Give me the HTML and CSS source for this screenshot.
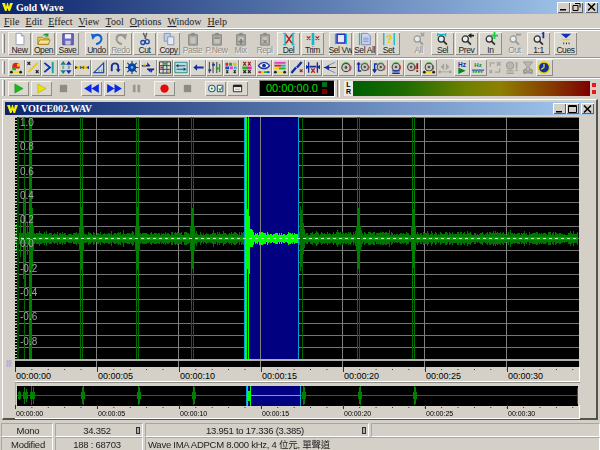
FILE: index.html
```html
<!DOCTYPE html>
<html lang="en">
<head>
<meta charset="utf-8">
<title>GoldWave</title>
<link rel="stylesheet" href="styles.css">
</head>
<body>
<svg class="defs" width="0" height="0" aria-hidden="true">
  <defs>
    <symbol id="logo" viewBox="0 0 11 8"><path d="M0 0h3l1 4 1-4h1l1 4 1-4h3L8 8H6.500L5.500 5 4.500 8H3z" fill="#f8f000"/></symbol>
    <symbol id="mag" viewBox="0 0 16 16"><circle cx="6" cy="8" r="3.500" fill="#e8eef0" stroke="currentColor" stroke-width="1.400"/><path d="M8.500 10.500l4 4" stroke="currentColor" stroke-width="2"/></symbol>
    <symbol id="clip" viewBox="0 0 16 16"><path d="M3 3h10v12H3z" fill="#a8a8a2" stroke="#807f7a"/><path d="M6 1h4v3H6z" fill="#8c8c86"/><path d="M5 6h6v7H5z" fill="#c4c4be"/></symbol>
    <symbol id="dial" viewBox="0 0 14 14"><circle cx="7" cy="7" r="4.500" fill="#c8c8c0" stroke="#404040" stroke-width="1.200"/><path d="M3 3.500a5.500 5.500 0 0 1 8 0" fill="none" stroke="#30b030"/><path d="M12 5a5.500 5.500 0 0 1-1 6" fill="none" stroke="#d03030"/><circle cx="7" cy="7" r="1.500" fill="#505050"/></symbol>
    <symbol id="rain" viewBox="0 0 14 14"><path d="M1 2h3v3H1z" fill="#e02020"/><path d="M5 2h3v3H5z" fill="#20a020"/><path d="M9 2h4v3H9z" fill="#e0c020"/><path d="M1 6h4v3H1z" fill="#2040d0"/><path d="M6 6h3v3H6z" fill="#e040d0"/><path d="M10 6h3v3h-3z" fill="#20c0c0"/></symbol>
  </defs>
</svg>
<div class="app">
  <header class="titlebar">
    <svg class="logo" width="11" height="8"><use href="#logo"/></svg>
    <span class="title">Gold Wave</span>
    <div class="caption">
      <button class="cap"><svg width="9" height="8"><path d="M1 6h6v1.500H1z" fill="#000"/></svg></button>
      <button class="cap"><svg width="9" height="8"><path d="M3 .5h5v4M1 2.500h5v5H1z" fill="none" stroke="#000"/></svg></button>
      <button class="cap cap-gap"><svg width="9" height="8"><path d="M1 .5l7 7M8 .5l-7 7" stroke="#000" stroke-width="1.500"/></svg></button>
    </div>
  </header>
  <nav class="menu">
    <span class="m m-file"><u>F</u>ile</span>
    <span class="m"><u>E</u>dit</span>
    <span class="m"><u>E</u>ffect</span>
    <span class="m"><u>V</u>iew</span>
    <span class="m"><u>T</u>ool</span>
    <span class="m"><u>O</u>ptions</span>
    <span class="m"><u>W</u>indow</span>
    <span class="m"><u>H</u>elp</span>
  </nav>

  <div class="row row1">
    <i class="grip"></i>
    <div class="grp">
      <div class="b"><svg viewBox="0 0 16 16"><path d="M3.500 1.500h6l3 3v10h-9z" fill="#fff" stroke="#8a96b8"/><path d="M9.500 1.500v3h3" fill="#d8e0f0" stroke="#8a96b8"/></svg><span>New</span></div>
      <div class="b"><svg viewBox="0 0 16 16"><path d="M1 6h5l1 1h6v7H1z" fill="#f0d060" stroke="#a08020"/><path d="M1 14l2-5h12l-2 5z" fill="#f8e488" stroke="#a08020"/><path d="M6 5c1-3 4-4 6-3l1-1v4H9l1-1c-1-.5-3 0-4 1z" fill="#20a030"/></svg><span>Open</span></div>
      <div class="b"><svg viewBox="0 0 16 16"><path d="M2 2h12v12.500H2z" fill="#6a68c0" stroke="#403e90"/><path d="M4.500 2.500h7v5h-7z" fill="#f0f0f8"/><path d="M5 10h6v4.500H5z" fill="#c8c8d8"/></svg><span>Save</span></div>
    </div>
    <div class="grp g6">
      <div class="b"><svg viewBox="0 0 16 16"><path d="M3 7c2-5 9-5 10 0 .6 3-2 6-6 7" fill="none" stroke="#1060d8" stroke-width="2.400"/><path d="M1 2l6 1-4 6z" fill="#1060d8"/></svg><span>Undo</span></div>
      <div class="b off"><svg viewBox="0 0 16 16"><path d="M13 7C11 2 4 2 3 7c-.6 3 2 6 6 7" fill="none" stroke="#989890" stroke-width="2.400"/><path d="M15 2l-6 1 4 6z" fill="#989890"/></svg><span>Redo</span></div>
      <div class="b"><svg viewBox="0 0 16 16"><path d="M6 1l3 7M10 1L8 8" stroke="#606060" stroke-width="1.600"/><circle cx="5.500" cy="12" r="2.300" fill="none" stroke="#1848b0" stroke-width="1.500"/><circle cx="10.500" cy="11" r="2.300" fill="none" stroke="#1848b0" stroke-width="1.500"/></svg><span>Cut</span></div>
      <div class="b"><svg viewBox="0 0 16 16"><path d="M2.500 1.500h7v9h-7z" fill="#c0cce8" stroke="#7f8fb4"/><path d="M6.500 5.500h7v9h-7z" fill="#e4eaf6" stroke="#7f8fb4"/></svg><span>Copy</span></div>
      <div class="b off flat"><svg viewBox="0 0 16 16"><use href="#clip"/></svg><span>Paste</span></div>
      <div class="b off flat"><svg viewBox="0 0 16 16"><use href="#clip"/><path d="M5 6h6v2H5z" fill="#8c8c86"/></svg><span>P.New</span></div>
      <div class="b off flat"><svg viewBox="0 0 16 16"><use href="#clip"/><path d="M7 8h2v2h2v2H9v2H7v-2H5v-2h2z" fill="#807f7a"/></svg><span>Mix</span></div>
      <div class="b off flat"><svg viewBox="0 0 16 16"><use href="#clip"/><path d="M6 9l4 4M10 9l-4 4" stroke="#807f7a" stroke-width="1.300"/></svg><span>Repl</span></div>
      <div class="b"><svg viewBox="0 0 16 16"><path d="M3.500 1v14M12.500 1v14" stroke="#10b8c8" stroke-width="1.600"/><path d="M1 1.500h4M1 14.500h4M11 1.500h4M11 14.500h4" stroke="#10b8c8"/><path d="M4.500 3l7 10M11.500 3l-7 10" stroke="#b02020" stroke-width="1.800"/></svg><span>Del</span></div>
      <div class="b"><svg viewBox="0 0 16 16"><path d="M8 1v14" stroke="#10b8c8" stroke-width="3"/><path d="M1 5l4 4M5 5L1 9M11 5l4 4M15 5l-4 4" stroke="#c02020" stroke-width="1.500"/></svg><span>Trim</span></div>
    </div>
    <div class="grp g5">
      <div class="b"><svg viewBox="0 0 16 16"><path d="M1 2h1.500v12H1zM13.500 2H15v12h-1.500z" fill="#10b8c8"/><path d="M3.500 2.500h9v10h-9z" fill="#e8e8f8" stroke="#2030c0" stroke-width="1.800"/></svg><span>Sel Vw</span></div>
      <div class="b"><svg viewBox="0 0 16 16"><path d="M1 1h1.500v14H1z" fill="#10b8c8"/><path d="M4 1.500h7l3 3v10H4z" fill="#c8d4f0" stroke="#7080b8"/><path d="M6 7h6M6 9h6M6 11h6" stroke="#8090c0"/></svg><span>Sel All</span></div>
      <div class="b"><svg viewBox="0 0 16 16"><path d="M2 1v14M14 1v14" stroke="#10b8c8" stroke-width="1.500"/><text x="8" y="12" class="q">?</text></svg><span>Set</span></div>
    </div>
    <div class="grp g7">
      <div class="b off flat gr"><svg viewBox="0 0 16 16"><use href="#mag"/><path d="M10 1l4 4M14 1l-4 4" stroke="#989890" stroke-width="1.500"/></svg><span>All</span></div>
      <div class="b dk"><svg viewBox="0 0 16 16"><use href="#mag"/><path d="M2 1v4M11 1v4M2 3h9" stroke="#10b8c8" stroke-width="1.300"/></svg><span>Sel</span></div>
      <div class="b dk"><svg viewBox="0 0 16 16"><use href="#mag"/><path d="M9 4l4-3v2h3v2h-3v2z" fill="#202020"/></svg><span>Prev</span></div>
      <div class="b dk"><svg viewBox="0 0 16 16"><use href="#mag"/><path d="M11 0h2v3h3v2h-3v3h-2V5H8V3h3z" fill="#10d040"/></svg><span>In</span></div>
      <div class="b off flat gr"><svg viewBox="0 0 16 16"><use href="#mag"/><path d="M9 2h6v2H9z" fill="#989890"/></svg><span>Out</span></div>
      <div class="b dk"><svg viewBox="0 0 16 16"><use href="#mag"/><path d="M11 1l2-1h1v7h-2V2h-1z" fill="#1030a0"/></svg><span>1:1</span></div>
    </div>
    <div class="grp g4">
      <div class="b"><svg viewBox="0 0 16 16"><path d="M2 2h12L8 7z" fill="#1030c0"/><path d="M3 8h10v1.500H3z" fill="#f0d000"/><path d="M5 12h1v2H5zM8 12h1v2H8zM11 12h1v2h-1z" fill="#202020"/></svg><span>Cues</span></div>
    </div>
  </div>

  <div class="row row2">
    <i class="grip"></i>
    <div class="s"><svg viewBox="0 0 14 14"><path d="M3 6a4 4 0 0 1 8 0v2H3z" fill="#e02020"/><path d="M3 7h4v3H3z" fill="#20b020"/><path d="M8 3h3v3H8z" fill="#f0d000"/><path d="M1 12h12" stroke="#f0e000" stroke-width="1.500"/><circle cx="2" cy="12" r="1.500" fill="#202020"/><circle cx="12" cy="12" r="1.500" fill="#202020"/></svg></div>
    <div class="s"><svg viewBox="0 0 14 14"><path d="M2 12l10-10" stroke="#e8c820" stroke-width="2"/><path d="M1 1l3 3M4 1L1 4M10 10l3 3M13 10l-3 3" stroke="#202020" stroke-width="1.300"/></svg></div>
    <div class="s"><svg viewBox="0 0 14 14"><path d="M2 2l6 5-6 5" fill="none" stroke="#1030c0" stroke-width="2"/><path d="M11 1v12" stroke="#10a0a0" stroke-width="2"/></svg></div>
    <div class="s"><svg viewBox="0 0 14 14"><path d="M4 0l3 4H1zM4 14l3-4H1z" fill="#108080"/><path d="M10 0l3 4H7zM10 14l3-4H7z" fill="#1030b0"/><path d="M4 5v4M10 5v4" stroke="#108080" stroke-width="2" stroke-dasharray="1 1"/></svg></div>
    <div class="s"><svg viewBox="0 0 16 14"><path d="M0 7h16" stroke="#e8c820" stroke-width="3"/><path d="M0 5l3 2-3 2zM16 5l-3 2 3 2zM6 5l2 2 2-2v4L8 7 6 9z" fill="#1030c0"/></svg></div>
    <div class="s"><svg viewBox="0 0 14 14"><path d="M1.500 12.500L12 2v10.500z" fill="#d0d8f0" stroke="#1848b0" stroke-width="1.300"/><path d="M7 12.500v-3M10 12.500V9" stroke="#a0a000"/></svg></div>
    <div class="s"><svg viewBox="0 0 14 14"><path d="M3.500 11V6a3.500 3.500 0 0 1 7 0v4" fill="none" stroke="#1030a0" stroke-width="2"/><path d="M8 9h5l-2.500 3.500z" fill="#1030a0"/></svg></div>
    <div class="s"><svg viewBox="0 0 14 14"><circle cx="7" cy="7" r="4.500" fill="#1040a0"/><path d="M7 0v14M0 7h14M2 2l10 10M12 2L2 12" stroke="#1040a0" stroke-width="1.300"/><circle cx="7" cy="7" r="1.500" fill="#40c0d0"/></svg></div>
    <div class="s"><svg viewBox="0 0 16 14"><path d="M1 5h9M7 9h8" stroke="#202050" stroke-width="1.500"/><path d="M7 1l4 4-4 0zM11 13l-4-4 4 0z" fill="#1030c0"/><path d="M4 2L2 5h4z" fill="#e0c020"/><path d="M12 13l-2-4h4z" fill="#1030c0"/></svg></div>
    <div class="s"><svg viewBox="0 0 14 14"><path d="M1 1h12v12H1z" fill="#e0e0d0" stroke="#303030"/><path d="M1 5h12M1 9h12M5 1v12M9 1v12" stroke="#204080"/><path d="M2 6h3v2H2z" fill="#c03030"/><path d="M6 2h3v2H6z" fill="#30a030"/><path d="M10 10h2v2h-2z" fill="#e0c020"/></svg></div>
    <div class="s lit"><svg viewBox="0 0 16 14"><path d="M1 1h14v12H1z" fill="#b8dcd8" stroke="#208080"/><path d="M3 5h10M3 9h10" stroke="#104080"/><path d="M5 3L2 5l3 2zM11 7l3 2-3 2z" fill="#104080"/></svg></div>
    <div class="s"><svg viewBox="0 0 14 14"><path d="M2 7l4-3.500V6h7v2H6v2.500z" fill="#1030a0"/></svg></div>
    <div class="s"><svg viewBox="0 0 14 14"><path d="M2 1v12M6 1v12M10 1v12" stroke="#303030"/><path d="M1 9h3v2H1zM5 3h3v2H5z" fill="#204080"/><path d="M9 7h3v2H9z" fill="#20a020"/><path d="M13 3v9" stroke="#20a020" stroke-width="1.500"/></svg></div>
    <div class="s"><svg viewBox="0 0 14 14"><use href="#rain"/><path d="M2 10l2 3M4 10l-2 3M10 10l2 3M12 10l-2 3" stroke="#202020" stroke-width="1.200"/></svg></div>
    <div class="s"><svg viewBox="0 0 14 14"><path d="M3 1l3 4M6 1L3 5M8 1l3 4M11 1L8 5" stroke="#a02020" stroke-width="1.300"/><path d="M2 6h5v3H2z" fill="#20b020"/><path d="M7 6h5v3H7z" fill="#e020c0"/><path d="M3 10l3 3M6 10l-3 3M8 10l3 3M11 10l-3 3" stroke="#202020" stroke-width="1.300"/></svg></div>
    <div class="s"><svg viewBox="0 0 14 14"><path d="M1 5c3-4.500 9-4.500 12 0-3 4.500-9 4.500-12 0z" fill="#e8e8f8" stroke="#1030a0" stroke-width="1.200"/><circle cx="7" cy="5" r="2" fill="#1030a0"/><path d="M1 11h3v2H1z" fill="#e02020"/><path d="M4 11h3v2H4z" fill="#f0d000"/><path d="M7 11h3v2H7z" fill="#20b020"/><path d="M10 11h3v2h-3z" fill="#2040e0"/></svg></div>
    <div class="s"><svg viewBox="0 0 14 14"><path d="M1 1h12v2H1z" fill="#e040c0"/><path d="M1 4h7v2H1z" fill="#e02020"/><path d="M8 4h5v2H8z" fill="#20a0e0"/><path d="M1 7h5v2H1z" fill="#f0d000"/><path d="M6 7h7v2H6z" fill="#20b020"/><path d="M1 12h12" stroke="#f0e000" stroke-width="1.200"/><circle cx="2" cy="12" r="1.500" fill="#202020"/><circle cx="12" cy="12" r="1.500" fill="#202020"/></svg></div>
    <div class="s"><svg viewBox="0 0 14 14"><path d="M1 13l5-6M7 7l5-6" stroke="#1030a0" stroke-width="2.500"/><path d="M10 9l3 3M13 9l-3 3" stroke="#a02020" stroke-width="1.300"/></svg></div>
    <div class="s"><svg viewBox="0 0 16 14"><path d="M3 1v12M13 1v12" stroke="#1030a0" stroke-width="1.500"/><path d="M0 4l4 2.500L0 9zM16 4l-4 2.500L16 9z" fill="#1030a0"/><path d="M4 6h8" stroke="#1030a0" stroke-width="2"/><path d="M6 8l4 5M10 8l-4 5" stroke="#c02020" stroke-width="1.600"/></svg></div>
    <div class="s"><svg viewBox="0 0 16 14"><path d="M1 7h14" stroke="#1030a0" stroke-width="1.200"/><path d="M5 5l9-4M5 9l9 4" stroke="#7080c0"/><path d="M1 7l6-3v6z" fill="#1030a0"/></svg></div>
    <div class="s"><svg viewBox="0 0 14 14"><use href="#dial"/></svg></div>
    <div class="s"><svg viewBox="0 0 16 14"><path d="M1 3h4M3 1v10h3" fill="none" stroke="#1030a0" stroke-width="1.800"/><svg x="3" width="13" height="14" viewBox="0 0 14 14"><use href="#dial"/></svg></svg></div>
    <div class="s"><svg viewBox="0 0 16 14"><path d="M3 11V3h3M1 9l2 3 2-3" fill="none" stroke="#1030a0" stroke-width="1.600"/><svg x="3" width="13" height="14" viewBox="0 0 14 14"><use href="#dial"/></svg></svg></div>
    <div class="s"><svg viewBox="0 0 14 14"><svg width="14" height="10" viewBox="0 0 14 14"><use href="#dial"/></svg><path d="M3 10h8v1.300H3zM3 12.500h8V14H3z" fill="#1030a0"/></svg></div>
    <div class="s"><svg viewBox="0 0 16 14"><svg width="13" height="14" viewBox="0 0 14 14"><use href="#dial"/></svg><path d="M13 2h2v7h-2zM13 10h2v2h-2z" fill="#a01010"/></svg></div>
    <div class="s"><svg viewBox="0 0 14 14"><svg width="14" height="11" viewBox="0 0 14 14"><use href="#dial"/></svg><path d="M1 12h12" stroke="#f0e000" stroke-width="1.500"/><circle cx="2" cy="12" r="1.500" fill="#202020"/><circle cx="12" cy="12" r="1.500" fill="#202020"/></svg></div>
    <div class="s flat"><svg viewBox="0 0 16 14"><path d="M7 2L3 6l4 4zM9 2l4 4-4 4z" fill="#a4a49c"/><path d="M1 12h14" stroke="#a4a49c"/><circle cx="2" cy="12" r="1.500" fill="#a4a49c"/><circle cx="14" cy="12" r="1.500" fill="#a4a49c"/></svg></div>
    <div class="s"><svg viewBox="0 0 14 14"><text x="7" y="6" class="hz hz-b">Hz</text><path d="M3 7l8 3.500L3 14z" fill="#108030"/></svg></div>
    <div class="s"><svg viewBox="0 0 16 14"><text x="8" y="6" class="hz hz-g">Hz</text><path d="M1 10h14" stroke="#1040a0" stroke-width="1.200"/><path d="M2 12h12" stroke="#30a030" stroke-width="2" stroke-dasharray="2 1"/></svg></div>
    <div class="s flat"><svg viewBox="0 0 14 14"><path d="M2 6V2h5M12 8v4H7M1 10l3 3M4 10l-3 3M9 1l4 4M13 1L9 5" fill="none" stroke="#a4a49c" stroke-width="1.500"/></svg></div>
    <div class="s flat"><svg viewBox="0 0 14 14"><circle cx="6" cy="5" r="4" fill="#b8b8b0" stroke="#989890"/><path d="M2 10h8v1.300H2zM2 12.500h8V14H2zM12 1h2v7h-2zM12 9h2v2h-2z" fill="#a4a49c"/></svg></div>
    <div class="s flat"><svg viewBox="0 0 14 14"><path d="M2 1h10L8 6l4 7H2l4-7z" fill="#b8b8b0" stroke="#989890"/><circle cx="4" cy="11" r="2" fill="none" stroke="#8c8c84"/><circle cx="10" cy="11" r="2" fill="none" stroke="#8c8c84"/></svg></div>
    <div class="s"><svg viewBox="0 0 14 14"><circle cx="7" cy="7" r="6" fill="#1030a0" stroke="#e8d000" stroke-width="1.500"/><path d="M7 3v4l-3 2" fill="none" stroke="#f0e040" stroke-width="1.300"/></svg></div>
  </div>

  <div class="row row3">
    <i class="grip"></i>
    <div class="tgrp">
      <div class="t"><svg viewBox="0 0 12 12"><path d="M2 1l9 5-9 5z" fill="#18b818" stroke="#108010" stroke-width=".5"/></svg></div>
      <div class="t"><svg viewBox="0 0 12 12"><path d="M2 1l9 5-9 5z" fill="#e8e010" stroke="#a0a000" stroke-width=".5"/></svg></div>
      <div class="t flat"><svg viewBox="0 0 12 12"><path d="M2 2h8v8H2z" fill="#8c8c86"/></svg></div>
    </div>
    <div class="tgrp">
      <div class="t"><svg class="wide" viewBox="0 0 18 12"><path d="M9 1v10L1 6zM17 1v10L9 6z" fill="#0828e8"/></svg></div>
      <div class="t"><svg class="wide" viewBox="0 0 18 12"><path d="M1 1v10l8-5zM9 1v10l8-5z" fill="#0828e8"/></svg></div>
      <div class="t flat"><svg viewBox="0 0 12 12"><path d="M2 2h3v8H2zM7 2h3v8H7z" fill="#989890"/></svg></div>
    </div>
    <div class="tgrp">
      <div class="t"><svg viewBox="0 0 12 12"><circle cx="6" cy="6" r="4.500" fill="#e80808"/></svg></div>
      <div class="t flat"><svg viewBox="0 0 12 12"><path d="M2 2h8v8H2z" fill="#8c8c86"/></svg></div>
    </div>
    <div class="tgrp">
      <div class="t"><svg class="wide" viewBox="0 0 18 12"><circle cx="5" cy="6" r="3.500" fill="#f4f4f0" stroke="#206080" stroke-width="1.200"/><circle cx="5" cy="6" r="1.200" fill="#208040"/><path d="M11 2.500h6v7h-6z" fill="#f4f4f0" stroke="#204080"/><path d="M12.500 6l1.500 2 2.500-4" fill="none" stroke="#10a030" stroke-width="1.200"/></svg></div>
      <div class="t"><svg viewBox="0 0 12 12"><path d="M1.500 2.500h9v7h-9z" fill="#fff" stroke="#202020"/><path d="M1.500 2h9v2.500h-9z" fill="#202020"/><path d="M3 6h6v2H3z" fill="#c0c0b8"/></svg></div>
    </div>
    <div class="clock">
      <span class="digits">00:00:00.0</span>
      <div class="leds"><i class="led led-g"></i><i class="led led-r"></i></div>
    </div>
    <i class="sep"></i>
    <div class="lr"><b>L</b><b>R</b></div>
    <div class="meter"></div>
    <div class="peaks"><i></i><i></i></div>
  </div>

  <section class="child">
    <header class="ctitle">
      <svg class="logo" width="11" height="8"><use href="#logo"/></svg>
      <span class="ctext">VOICE002.WAV</span>
      <div class="caption ccap">
        <button class="cap"><svg width="9" height="8"><path d="M1 6h6v1.500H1z" fill="#000"/></svg></button>
        <button class="cap"><svg width="9" height="8"><path d="M.5 .5h8v7h-8zM.5 1.500h8" fill="none" stroke="#000"/></svg></button>
        <button class="cap cap-gap"><svg width="9" height="8"><path d="M1 .5l7 7M8 .5l-7 7" stroke="#000" stroke-width="1.500"/></svg></button>
      </div>
    </header>
    <div class="cbody">
      <div class="gutter"><span class="sash">|||</span></div>
      <div class="views">
        <div class="main">
          <canvas id="wave" width="564" height="250"></canvas>
          <div class="yaxis">
            <span>1.0</span><span>0.8</span><span>0.6</span><span>0.4</span><span>0.2</span><span>0.0</span><span>-0.2</span><span>-0.4</span><span>-0.6</span><span>-0.8</span>
          </div>
        </div>
        <div class="ruler r-main">
          <span>00:00:00</span><span>00:00:05</span><span>00:00:10</span><span>00:00:15</span><span>00:00:20</span><span>00:00:25</span><span>00:00:30</span>
        </div>
        <div class="over"><canvas id="overview" width="561" height="20"></canvas></div>
        <div class="ruler r-over">
          <span>00:00:00</span><span>00:00:05</span><span>00:00:10</span><span>00:00:15</span><span>00:00:20</span><span>00:00:25</span><span>00:00:30</span>
        </div>
      </div>
    </div>
  </section>

  <footer class="status">
    <div class="c ctr">Mono</div>
    <div class="c ctr thumbed">34.352<i class="thumb"></i></div>
    <div class="c ctr thumbed">13.951 to 17.336 (3.385)<i class="thumb"></i></div>
    <div class="c"></div>
    <div class="c ctr">Modified</div>
    <div class="c ctr thumbed">188 : 68703</div>
    <div class="c info">Wave IMA ADPCM 8.000 kHz, 4 位元, 單聲道</div>
  </footer>
</div>
<script src="wave.js"></script>
</body>
</html>
```
FILE: styles.css
```css
* { box-sizing: border-box; }
html, body { margin: 0; height: 100%; overflow: hidden; }
body { background: #d4d0c8; font-family: "Liberation Sans", "Noto Sans CJK TC", sans-serif; color: #000; }
.defs { display: block; height: 0; }
.app { width: 600px; height: 450px; display: flex; flex-direction: column; }

.titlebar { height: 14px; flex: none; display: flex; align-items: center; padding-left: 2px; background: linear-gradient(90deg, #0a246a, #a6caf0); }
.logo { flex: none; }
.title { margin-left: 3px; color: #fff; font: bold 10px "Liberation Serif", serif; }
.caption { margin-left: auto; display: flex; padding-right: 2px; gap: 0; }
.cap { width: 13px; height: 11px; padding: 0; margin: 0; border: 0; background: #d4d0c8; box-shadow: inset 1px 1px #fff, inset -1px -1px #606060; display: flex; align-items: center; justify-content: center; }
.cap-gap { margin-left: 2px; }

.menu { height: 15px; flex: none; display: flex; align-items: center; gap: 6px; padding-left: 4px; font: 10px "Liberation Serif", serif; color: #222; border-bottom: 1px solid #fff; }

.row { flex: none; display: flex; position: relative; border-top: 1px solid #9b988f; box-shadow: inset 0 1px #fff; }
.grip { flex: none; display: block; width: 3px; background: #d4d0c8; border-left: 1px solid #fff; border-right: 1px solid #808080; margin: 2px 3px 2px 2px; }
.row1 { height: 28px; padding: 2px 0; }
.row2 { height: 20px; padding: 1px 0; }
.row3 { height: 21px; align-items: center; }
.row3 .grip { align-self: stretch; }

.grp { display: flex; gap: 1px; }
.g6 { margin-left: 6px; }
.g5 { margin-left: 5px; }
.g7 { margin-left: 7px; }
.g4 { margin-left: 4px; }
.b { width: 23px; height: 23px; display: flex; flex-direction: column; align-items: center; background: #dad7cf; box-shadow: inset 1px 1px #f4f2ec, inset -1px -1px #8e8c86; font-size: 8.500px; line-height: 9px; letter-spacing: -.4px; white-space: nowrap; color: #1c1c1c; overflow: hidden; }
.b svg { display: block; width: 14px; height: 14px; flex: none; }
.b.off { color: #908e88; text-shadow: 1px 1px #f4f2ec; }
.b.flat { background: none; box-shadow: none; }
.b.gr svg { color: #989890; }
.b.dk svg { color: #303030; }
.q { font: bold 12px "Liberation Sans", sans-serif; fill: #e8c800; text-anchor: middle; }

.row2 .grip { margin-right: 3px; }
.s { width: 16.500px; height: 17px; flex: none; display: flex; align-items: center; justify-content: center; background: #dad7cf; box-shadow: inset 1px 1px #f4f2ec, inset -1px -1px #8e8c86; }
.s svg { display: block; width: 14px; height: 13px; }
.s.flat { background: none; box-shadow: none; }
.s.lit { background: #e6e3dc; }
.hz { font: bold 7px "Liberation Sans", sans-serif; text-anchor: middle; }
.hz-b { fill: #1030a0; }
.hz-g { fill: #108030; }

.tgrp { display: flex; gap: 1.500px; margin-right: 7px; }
.t { width: 21px; height: 15px; display: flex; align-items: center; justify-content: center; background: #dad7cf; box-shadow: inset 1px 1px #f4f2ec, inset -1px -1px #8e8c86; }
.t svg { width: 11px; height: 11px; display: block; }
.t svg.wide { width: 17px; }
.t.flat { background: none; box-shadow: none; }
.clock { margin-left: 4px; width: 76px; height: 17px; display: flex; align-items: center; justify-content: space-between; background: #000; border: 1px solid #808080; border-right-color: #fff; border-bottom-color: #fff; padding: 0 7px 0 6px; }
.digits { color: #00e000; font-size: 11px; }
.leds { display: flex; flex-direction: column; gap: 2px; }
.led { display: block; width: 5px; height: 5px; }
.led-g { background: #006f18; }
.led-r { background: #7a0000; }
.sep { flex: none; width: 3px; height: 17px; margin: 0 4px 0 2px; border-left: 1px solid #808080; border-right: 1px solid #fff; }
.lr { width: 9px; height: 15px; display: flex; flex-direction: column; align-items: center; background: #ecebe6; font-size: 7px; line-height: 7.500px; }
.meter { width: 237px; height: 15px; background: linear-gradient(90deg, #005f00 0%, #1f6c00 22%, #6f8000 48%, #8e8000 62%, #864000 82%, #7e0000 100%); }
.peaks { margin-left: 2px; display: flex; flex-direction: column; gap: 3px; }
.peaks i { display: block; width: 4px; height: 4px; background: #e81818; }

.child { margin: 1px 2px 0; height: 321px; flex: none; display: flex; flex-direction: column; padding: 2px 2px 0; border-top: 1px solid #fff; border-left: 1px solid #fff; border-right: 2px solid #55534e; border-bottom: 2px solid #55534e; }
.ctitle { height: 13px; flex: none; display: flex; align-items: center; padding-left: 2px; background: linear-gradient(90deg, #0a246a, #a6caf0); }
.ctext { margin-left: 3px; color: #fff; font: bold 10px "Liberation Serif", serif; letter-spacing: -.1px; }
.ccap { padding-right: 0; }
.cbody { flex: 1; display: flex; min-height: 0; padding-top: 2px; }
.gutter { width: 10px; flex: none; display: flex; flex-direction: column; justify-content: flex-end; padding-bottom: 51px; }
.sash { color: #8f90d8; font-size: 8px; line-height: 9px; letter-spacing: -.2px; padding-left: 1px; }
.views { width: 565px; flex: none; display: flex; flex-direction: column; }
.main { position: relative; height: 250px; flex: none; }
#wave { display: block; }
.yaxis { position: absolute; left: 5px; top: 0; display: flex; flex-direction: column; color: #a4a4a4; font-size: 10px; }
.yaxis span { height: 24.300px; line-height: 12px; }

.ruler { display: flex; background-image: linear-gradient(90deg, #333 1px, transparent 1px), linear-gradient(90deg, #333 1px, transparent 1px); background-repeat: repeat-x; border-right: 1px solid #fff; border-bottom: 1px solid #fff; }
.ruler span { width: 82px; flex: none; padding-left: 1px; }
.r-main { height: 15px; padding-top: 4px; font-size: 9px; line-height: 10px; background-size: 82px 5px, 16.400px 1px; background-position: 0 0, 0 2px; }
.over { height: 23px; flex: none; padding: 3px 0 0 1px; border-top: 1px solid #908e88; border-left: 1px solid #b0aea8; }
#overview { display: block; }
.r-over { height: 14px; padding-top: 5px; font-size: 7px; line-height: 8px; background-size: 82px 4px, 16.400px 1px; background-position: 0 0, 0 2px; }

.status { margin-top: 3px; flex: 1; display: grid; grid-template-columns: 52px 88px 224px 1fr; grid-template-rows: 14px 14px; gap: 0 2px; padding-left: 1px; font-size: 9.500px; letter-spacing: -.25px; color: #222; }
.c { display: flex; align-items: center; position: relative; padding-left: 2px; border-top: 1px solid #a8a69f; border-left: 1px solid #a8a69f; border-right: 1px solid #fff; border-bottom: 1px solid #fff; white-space: nowrap; }
.ctr { justify-content: center; }
.thumbed { padding-right: 6px; }
.info { grid-column: span 2; }
.thumb { position: absolute; right: 2px; top: 3px; width: 4px; height: 7px; background: #aaa; border: 1px solid #303030; }
```
FILE: wave.js
```js
(function () {
  var seed = 12345;
  function rnd() {
    seed = (seed * 1103515245 + 12345) & 0x7fffffff;
    return seed / 0x7fffffff;
  }
  var OX = 17;
  var SEL0 = 246 - OX, SEL1 = 301 - OX;

  /* main view */
  var c = document.getElementById('wave').getContext('2d');
  var W = 564, PLOT = 242, MID = 121;
  function r(col, x, y, w, h) { c.fillStyle = col; c.fillRect(x, y, w, h); }
  r('#000', 0, 0, W, 250);
  r('#000080', SEL0, 0, SEL1 - SEL0, PLOT);
  for (var i = -10; i <= 10; i++) {
    var y = Math.round(MID + i * 12.13);
    if (y < 0 || y >= PLOT) continue;
    r('#747474', 0, y, SEL0, 1);
    r('#747474', SEL1, y, W - SEL1, 1);
  }
  for (var g = 1; g <= 6; g++) r('#808080', g * 82 - 1, 0, 1, 250);

  function col(cx, a, color) { a = Math.round(Math.min(a, MID)); r(color, cx, MID - a, 1, 2 * a + 1); }

  /* continuous noise */
  for (var x = 0; x < W - 1; x++) {
    var inSel = x >= SEL0 + 5 && x < SEL1;
    if (inSel) {
      var d = (x - SEL0) / (SEL1 - SEL0);
      col(x, 3 + rnd() * 3.5 * (1.1 - d * 0.4), '#00ff00');
    } else {
      var a = 3 + rnd() * 3;
      if (rnd() < 0.1) a += 2;
      col(x, a, '#007400');
      col(x, 1, '#00a000');
    }
  }

  /* clicks: two thin lines running the full height, with a burst at the centre */
  [[65, 68], [121, 68], [176, 66], [342, 66], [397, 64]].forEach(function (s) {
    var x0 = s[0];
    r('#006c00', x0, 0, 1, PLOT);
    r('#006c00', x0 + 2, 0, 1, PLOT);
    col(x0, s[1], '#008000');
    col(x0 + 1, s[1] * 0.45, '#008000');
    col(x0 + 2, s[1] * 0.8, '#008000');
    col(x0 - 1, 12, '#007400');
    col(x0 + 3, 12, '#007400');
  });
  /* cluster at the very start of the recording */
  r('#004c00', 2, 0, 2, PLOT);
  r('#006c00', 9, 0, 1, PLOT);
  r('#008000', 14, 0, 3, PLOT);
  col(1, 14, '#007400'); col(5, 18, '#007400'); col(8, 40, '#008000'); col(10, 50, '#008000');
  col(12, 16, '#007400'); col(17, 30, '#008000'); col(18, 12, '#007400');

  /* the click after the selection */
  r('#006800', 287, 0, 1, PLOT);
  col(285, 32, '#006c00');
  col(286, 28, '#007400');
  col(287, 20, '#007400');
  col(288, 15, '#007400');
  col(289, 9, '#007400');

  /* the click that starts the selection */
  r('#00ff00', 230, 0, 2, PLOT);
  r('#00ff00', 233, 0, 1, PLOT);
  r('#00ff00', 230, 80, 2, 82);
  r('#00ff00', 232, 92, 1, 60);
  r('#00ff00', 233, 99, 2, 58);
  r('#00ff00', 235, 112, 2, 18);
  col(237, 8, '#00ff00');

  /* selection edges */
  r('#00a0d8', SEL0, 0, 1, PLOT);
  r('#00a0d8', SEL1 - 1, 0, 1, PLOT);

  /* zero line */
  for (var dx = 0; dx < W; dx += 6) r('#c0e0c0', dx, MID, 3, 1);

  /* left edge ticks */
  for (var ty = 0; ty < PLOT; ty += 3) r('#c8c8c8', 0, ty, 2, 1);

  /* divider under the plot */
  r('#b0aea8', 0, PLOT, W, 2);
  for (var gg = 1; gg <= 6; gg++) r('#888', gg * 82 - 1, PLOT + 2, 1, 6);

  /* overview */
  c = document.getElementById('overview').getContext('2d');
  r('#000', 0, 0, 561, 20);
  r('#000080', SEL0, 0, SEL1 - SEL0, 20);
  r('#008000', 0, 9, 561, 1);
  r('#00ff00', SEL0, 9, SEL1 - SEL0, 1);
  [[2, 4], [7, 8], [9, 6], [14, 9], [16, 8], [65, 8], [66, 9], [121, 9], [122, 8], [176, 9], [177, 8], [286, 9], [287, 8], [342, 8], [343, 9], [397, 9], [398, 8]].forEach(function (p) {
    r('#008000', p[0], 9 - p[1], 1, 2 * p[1] + 1);
    r('#008000', p[0] - 1, 6, 3, 7);
  });
  r('#00ff00', 230, 0, 1, 20);
  r('#00ff00', 233, 0, 1, 20);
  r('#00ff00', 229, 5, 5, 10);
  r('#00a0d8', SEL0, 0, 1, 20);
  r('#00a0d8', SEL1 - 1, 0, 1, 20);
  r('#008000', 560, 2, 1, 16);
})();
```
